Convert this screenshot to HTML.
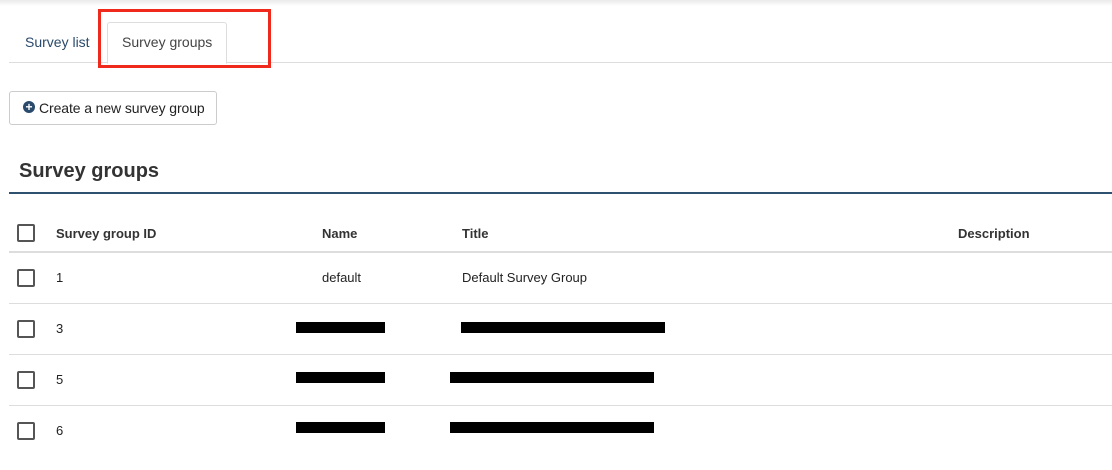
<!DOCTYPE html><html><head><style>
body{margin:0;width:1112px;height:470px;background:#fff;font-family:"Liberation Sans",sans-serif;position:relative;overflow:hidden;color:#222}
.a{position:absolute}
.cb{position:absolute;left:17px;width:14px;height:14px;border:2px solid #555;border-radius:2px}
.t{position:absolute;font-size:13px}
.h{position:absolute;font-size:13px;font-weight:bold;color:#333}
.line{position:absolute;left:9px;right:0;height:1px;background:#ddd}
.bar{position:absolute;background:#000;height:11px}
</style></head><body>
<div class="a" style="left:0;top:0;width:1112px;height:6px;background:linear-gradient(#eaeaea,#fff)"></div>
<div class="a" style="left:25px;top:34px;font-size:14px;color:#2a4a6b">Survey list</div>
<div class="a" style="left:9px;top:62px;right:0;height:1px;background:#ddd"></div>
<div class="a" style="left:107px;top:22px;width:118px;height:40px;border:1px solid #ddd;border-bottom:1px solid #fff;border-radius:3px 3px 0 0;background:#fff"></div>
<div class="a" style="left:122px;top:34px;font-size:14px;color:#444">Survey groups</div>
<div class="a" style="left:98px;top:9px;width:167px;height:53px;border:3px solid #f0291d"></div>
<div class="a" style="left:9px;top:91px;width:206px;height:32px;border:1px solid #ccc;border-radius:3px"></div>
<div class="a" style="left:23px;top:101px;width:12px;height:12px;border-radius:50%;background:#2a4a6b;color:#fff;font-size:12px;line-height:12px;text-align:center;font-weight:bold">+</div>
<div class="a" style="left:39px;top:100px;font-size:14px;color:#222;letter-spacing:-0.1px">Create a new survey group</div>
<div class="a" style="left:19px;top:160px;font-size:20px;font-weight:bold;color:#333">Survey groups</div>
<div class="a" style="left:9px;top:192px;right:0;height:2px;background:#2e5170"></div>
<div class="cb" style="top:224px"></div>
<div class="h" style="left:56px;top:226px">Survey group ID</div>
<div class="h" style="left:322px;top:226px">Name</div>
<div class="h" style="left:462px;top:226px">Title</div>
<div class="h" style="left:958px;top:226px">Description</div>
<div class="line" style="top:251px;height:2px"></div>
<div class="cb" style="top:269px"></div>
<div class="t" style="left:56px;top:270px">1</div>
<div class="t" style="left:322px;top:270px">default</div>
<div class="t" style="left:462px;top:270px">Default Survey Group</div>
<div class="line" style="top:303px"></div>
<div class="cb" style="top:320px"></div>
<div class="t" style="left:56px;top:321px">3</div>
<div class="bar" style="left:296px;top:322px;width:89px"></div>
<div class="bar" style="left:461px;top:322px;width:204px"></div>
<div class="line" style="top:354px"></div>
<div class="cb" style="top:371px"></div>
<div class="t" style="left:56px;top:372px">5</div>
<div class="bar" style="left:296px;top:372px;width:89px"></div>
<div class="bar" style="left:450px;top:372px;width:204px"></div>
<div class="line" style="top:405px"></div>
<div class="cb" style="top:422px"></div>
<div class="t" style="left:56px;top:423px">6</div>
<div class="bar" style="left:296px;top:422px;width:89px"></div>
<div class="bar" style="left:450px;top:422px;width:204px"></div>
</body></html>
